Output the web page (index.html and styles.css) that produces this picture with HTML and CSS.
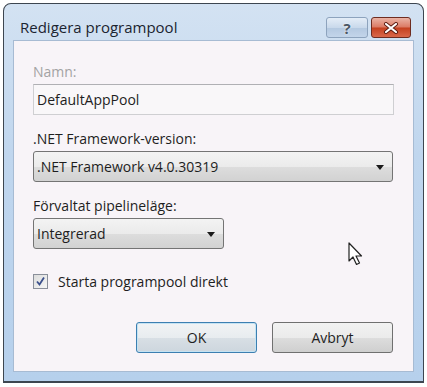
FILE: index.html
```html
<!DOCTYPE html>
<html lang="sv">

<head>
    <meta charset="UTF-8">
    <meta name="viewport" content="width=device-width, initial-scale=1.0">
    <title>Redigera programpool</title>
    <link rel="stylesheet" href="styles.css">
</head>

<body>

    <div class="window">
        <div class="titlebar">
            <div class="title">Redigera programpool</div>
            <div class="caption-buttons">
                <div class="cap-btn help">?</div>
                <div class="cap-btn close">
                    <svg width="16" height="12" viewBox="0 0 16 12">
                        <path d="M3 2 L13 10 M13 2 L3 10" stroke="#5a1a10" stroke-width="4" stroke-linecap="round" />
                        <path d="M3 2 L13 10 M13 2 L3 10" stroke="#ffffff" stroke-width="2.2" stroke-linecap="round" />
                    </svg>
                </div>
            </div>
        </div>

        <div class="client">
            <div class="field">
                <div class="label disabled">Namn:</div>
                <div class="textbox">DefaultAppPool</div>
            </div>

            <div class="field">
                <div class="label">.NET Framework-version:</div>
                <div class="select wide">
                    <span>.NET Framework v4.0.30319</span>
                    <span class="arrow"></span>
                </div>
            </div>

            <div class="field">
                <div class="label">Förvaltat pipelineläge:</div>
                <div class="select narrow">
                    <span>Integrerad</span>
                    <span class="arrow"></span>
                </div>
            </div>

            <div class="check-row">
                <div class="checkbox">
                    <svg width="11" height="11" viewBox="0 0 11 11">
                        <path d="M2 5.5 L4.5 8.5 L9 1.5" fill="none" stroke="#3b4f8c" stroke-width="1.8" />
                    </svg>
                </div>
                <span>Starta programpool direkt</span>
            </div>

            <div class="button-row">
                <div class="button default">OK</div>
                <div class="button">Avbryt</div>
            </div>

            <!-- mouse pointer left in the screenshot -->
            <svg class="cursor" width="16" height="25" viewBox="0 0 16 25">
                <path d="M1 1 L1 19 L5 15 L8.5 22.5 L11.5 21 L8 14 L13.5 14 Z" fill="#ffffff" stroke="#222" stroke-width="1.2" stroke-linejoin="round" />
            </svg>
        </div>
    </div>

</body>

</html>
```

FILE: styles.css
```css
body {
    margin: 0;
    background: #ffffff;
    font-family: 'Open Sans', 'Noto Sans', sans-serif;
    font-size: 14px;
    color: #1e1e1e;
}

/* Window frame */
.window {
    margin: 3px 3px 0 3px;
    height: 380px;
    border: 1px solid #3d4650;
    border-bottom-width: 2px;
    border-radius: 8px 8px 0 0;
    background: linear-gradient(180deg, #d3e2f2 0%, #c0d6ee 40%, #b6d0ec 100%);
    display: flex;
    flex-direction: column;
    box-sizing: border-box;
}

.titlebar {
    height: 36px;
    display: flex;
    align-items: flex-start;
    justify-content: space-between;
    padding: 0 12px 0 16px;
}

.title {
    font-size: 15px;
    color: #1b2430;
    margin-top: 13px;
}

.caption-buttons {
    display: flex;
    gap: 3px;
    margin-top: 13px;
}

.cap-btn {
    height: 19px;
    border-radius: 3px;
    display: flex;
    justify-content: center;
    align-items: center;
}

.help {
    width: 40px;
    border: 1px solid #8da3bd;
    background: linear-gradient(180deg, #e4edf7 0%, #c9d9eb 50%, #b3c8e0 51%, #c3d5ea 100%);
    color: #4a5664;
    font-weight: bold;
    font-size: 15px;
    text-shadow: 0 0 2px #fff;
}

.close {
    width: 38px;
    border: 1px solid #6e2c20;
    background: linear-gradient(180deg, #eab3a5 0%, #db7a64 48%, #c4401f 52%, #d9674a 100%);
}

/* Client area */
.client {
    flex: 1;
    margin: 0 9px 9px 9px;
    border: 1px solid #a7bbd3;
    background: #f8f4f8;
    padding: 21px 20px 0 19px;
    position: relative;
    display: flex;
    flex-direction: column;
}

.field {
    display: flex;
    flex-direction: column;
    gap: 2px;
    margin-bottom: 14px;
}

.label {
    line-height: 20px;
}

.label.disabled {
    color: #a3a3a3;
}

.textbox {
    height: 31px;
    box-sizing: border-box;
    width: 361px;
    border: 1px solid #cfcfd2;
    border-top-color: #b0b0b4;
    background: #f9f7f9;
    padding-left: 3px;
    display: flex;
    align-items: center;
}

.select {
    height: 31px;
    box-sizing: border-box;
    border: 1px solid #747474;
    border-radius: 3px;
    background: linear-gradient(180deg, #f3f3f3 0%, #ebebeb 50%, #dddddd 51%, #d2d2d2 100%);
    display: flex;
    align-items: center;
    justify-content: space-between;
    padding: 0 8px 0 3px;
}

.wide {
    width: 360px;
}

.narrow {
    width: 191px;
}

.arrow {
    width: 0;
    height: 0;
    border-left: 4px solid transparent;
    border-right: 4px solid transparent;
    border-top: 5px solid #1a1a1a;
    margin-top: 2px;
}

.check-row {
    display: flex;
    align-items: center;
    gap: 10px;
    margin-top: 9px;
}

.checkbox {
    width: 13px;
    height: 13px;
    border: 1px solid #8a8f9a;
    background: linear-gradient(135deg, #dcdcdc, #f6f6f6);
    display: flex;
    justify-content: center;
    align-items: center;
}

.button-row {
    display: flex;
    justify-content: flex-end;
    gap: 15px;
    margin-top: 31px;
}

.button {
    width: 121px;
    height: 31px;
    box-sizing: border-box;
    border: 1px solid #707070;
    border-radius: 3px;
    background: linear-gradient(180deg, #f2f2f2 0%, #ebebeb 50%, #dddddd 51%, #cfcfcf 100%);
    display: flex;
    justify-content: center;
    align-items: center;
}

.button.default {
    border-color: #3c7fb1;
    box-shadow: inset 0 0 0 1px #c5e3f3;
    background: linear-gradient(180deg, #f1f3f5 0%, #e8ecef 50%, #d8dfe5 51%, #cdd6de 100%);
}

.cursor {
    position: absolute;
    left: 334px;
    top: 201px;
}
```
